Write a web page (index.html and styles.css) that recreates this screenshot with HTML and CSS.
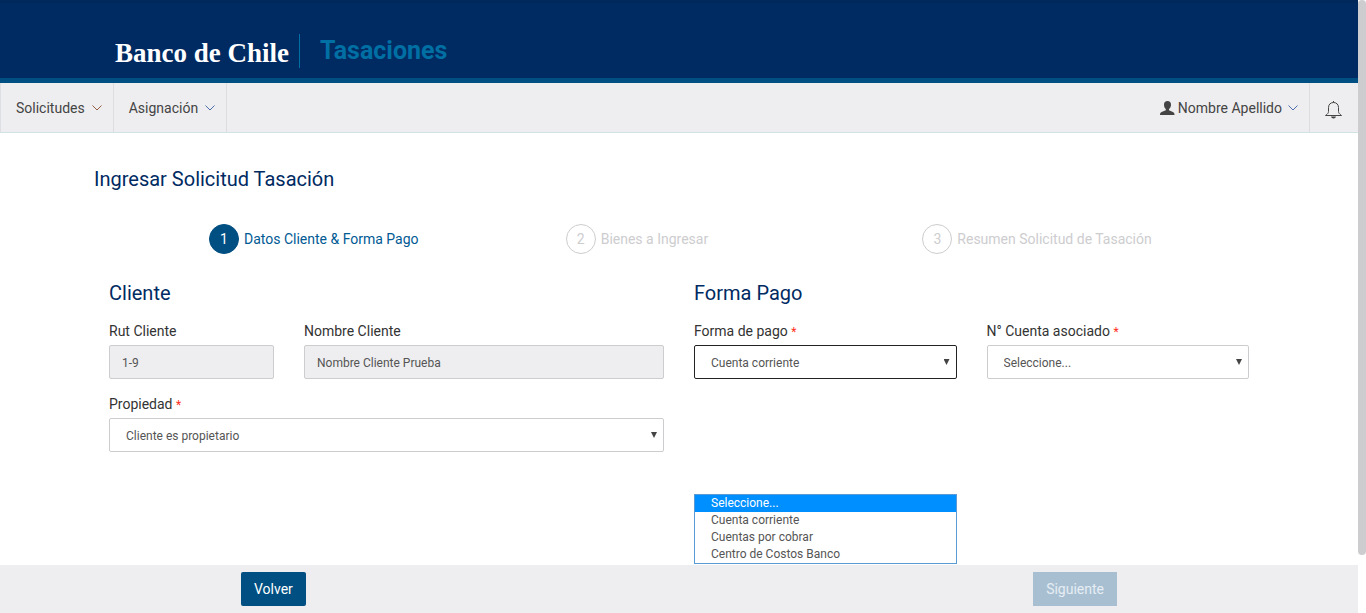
FILE: index.html
```html
<!DOCTYPE html>
<html lang="es">
<head>
<meta charset="utf-8">
<meta name="viewport" content="width=device-width, initial-scale=1">
<title>Tasaciones - Banco de Chile</title>
<link rel="stylesheet" href="styles.css">
</head>
<body>
<div class="shell">
  <div class="app">
    <header class="masthead">
      <div class="brand">
        <a class="brand-name" href="#">Banco de Chile</a>
        <span class="brand-app">Tasaciones</span>
      </div>
    </header>

    <nav class="navbar" aria-label="Principal">
      <a class="nav-item" href="#">Solicitudes
        <svg class="chevron chevron-warm" viewBox="0 0 10 6" aria-hidden="true"><path d="M.5.500l4.500 4.500 4.500-4.500"/></svg>
      </a>
      <a class="nav-item" href="#">Asignación
        <svg class="chevron" viewBox="0 0 10 6" aria-hidden="true"><path d="M.5.500l4.500 4.500 4.500-4.500"/></svg>
      </a>
      <a class="nav-item nav-user" href="#">
        <svg class="icon-user" viewBox="0 0 15 14" aria-hidden="true"><path d="M7.500 0C5.300 0 4 1.300 4 3.600c0 1.900.6 3.600 1.800 4.500v1.200L1.600 11C.5 11.500 0 12 0 14h14.500c0-2-.5-2.500-1.600-3L9 9.300V8.100c1.300-.9 2-2.600 2-4.500C11 1.300 9.700 0 7.500 0z"/></svg>
        <span class="user-name">Nombre Apellido</span>
        <svg class="chevron" viewBox="0 0 10 6" aria-hidden="true"><path d="M.5.500l4.500 4.500 4.500-4.500"/></svg>
      </a>
      <button class="nav-bell" type="button" aria-label="Notificaciones">
        <svg class="icon-bell" viewBox="0 0 17 18" aria-hidden="true"><path class="bell-line" d="M8.500 1.500C5.500 1.500 3.500 3.500 3.500 6.500v4c0 1.500-1 2.500-3 4h16c-2-1.500-3-2.500-3-4v-4c0-3-2-5-5-5zM8.500 1.500V0"/><path class="bell-clapper" d="M6 15.500h5c-.3 1.300-1.200 2-2.500 2s-2.200-.7-2.500-2z"/></svg>
      </button>
    </nav>

    <main class="content">
      <h1 class="page-title">Ingresar Solicitud Tasación</h1>
      <ol class="steps">
        <li class="step step-active" aria-current="step"><span class="step-number">1</span>Datos Cliente &amp; Forma Pago</li>
        <li class="step"><span class="step-number">2</span>Bienes a Ingresar</li>
        <li class="step"><span class="step-number">3</span>Resumen Solicitud de Tasación</li>
      </ol>

      <form class="panels">
        <section class="panel">
          <h2 class="panel-title">Cliente</h2>
          <div class="fields">
            <div class="field span-4">
              <label class="label" for="rut">Rut Cliente</label>
              <input class="control" id="rut" type="text" value="1-9" readonly>
            </div>
            <div class="field span-8">
              <label class="label" for="nombre">Nombre Cliente</label>
              <input class="control" id="nombre" type="text" value="Nombre Cliente Prueba" readonly>
            </div>
            <div class="field span-12">
              <label class="label" for="propiedad">Propiedad <span class="required">*</span></label>
              <div class="select">
                <select class="control" id="propiedad"><option>Cliente es propietario</option></select>
              </div>
            </div>
          </div>
        </section>

        <section class="panel">
          <h2 class="panel-title">Forma Pago</h2>
          <div class="fields">
            <div class="field span-6">
              <label class="label" for="forma">Forma de pago <span class="required">*</span></label>
              <div class="select select-open">
                <select class="control" id="forma">
                  <option>Seleccione...</option>
                  <option selected>Cuenta corriente</option>
                  <option>Cuentas por cobrar</option>
                  <option>Centro de Costos Banco</option>
                </select>
                <ul class="menu" role="listbox" aria-label="Forma de pago">
                  <li class="menu-item menu-item-active" role="option" aria-selected="true">Seleccione...</li>
                  <li class="menu-item" role="option">Cuenta corriente</li>
                  <li class="menu-item" role="option">Cuentas por cobrar</li>
                  <li class="menu-item" role="option">Centro de Costos Banco</li>
                </ul>
              </div>
            </div>
            <div class="field span-6">
              <label class="label" for="cuenta">N° Cuenta asociado <span class="required">*</span></label>
              <div class="select">
                <select class="control" id="cuenta"><option>Seleccione...</option></select>
              </div>
            </div>
          </div>
        </section>
      </form>
    </main>

    <footer class="actions">
      <div class="actions-inner">
        <button class="button" type="button">Volver</button>
        <button class="button" type="button" disabled>Siguiente</button>
      </div>
    </footer>
  </div>
  <div class="scroll-track" aria-hidden="true"><div class="scroll-thumb"></div></div>
</div>
</body>
</html>
```

FILE: styles.css
```css
* {
  box-sizing: border-box;
}

body {
  margin: 0;
  color: #333;
  background: #fff;
  font-family: Roboto, "Liberation Sans", sans-serif;
  font-size: 14px;
  line-height: 20px;
}

a {
  color: inherit;
  text-decoration: none;
}

.shell {
  display: flex;
  min-height: 100vh;
}

.app {
  display: flex;
  flex: 1;
  flex-direction: column;
  min-width: 0;
}

.scroll-track {
  flex: 0 0 8px;
  padding-bottom: 58px;
}

.scroll-thumb {
  height: 100%;
  border-radius: 4px;
  background: #cdcdcf;
}

/* Masthead */
.masthead {
  padding: 30px 115px 10px;
  border-top: 3px solid #00285b;
  border-bottom: 5px solid #004f82;
  background: #002a62;
}

.brand {
  display: flex;
  align-items: center;
  height: 35px;
}

.brand-name {
  width: 185px;
  padding-top: 4px;
  color: #fff;
  font: bold 27px/30px "Liberation Serif", serif;
  border-right: 1px solid #006fa3;
  white-space: nowrap;
}

.brand-app {
  padding-left: 20px;
  color: #006fa3;
  font-size: 25px;
  font-weight: 700;
}

/* Navigation */
.navbar {
  display: flex;
  height: 50px;
  border-bottom: 1px solid #d2e3e6;
  border-left: 1px solid #dedfe2;
  background: #eeeef0;
}

.nav-item {
  display: flex;
  gap: 7px;
  align-items: center;
  padding: 0 11px 0 15px;
  border-right: 1px solid #dcdde0;
  color: #444;
}

.nav-user {
  gap: 3px;
  margin-left: auto;
}

.user-name {
  padding-right: 3px;
}

.chevron {
  width: 10px;
  height: 6px;
  fill: none;
  stroke: #4d6fae;
}

.chevron-warm {
  stroke: #965f45;
}

.icon-user {
  width: 15px;
  height: 14px;
  fill: #444;
}

.nav-bell {
  width: 48px;
  padding: 7px 2px 0 0;
  border: 0;
  background: none;
}

.icon-bell {
  width: 17px;
  height: 18px;
}

.bell-line {
  fill: none;
  stroke: #444;
}

.bell-clapper {
  fill: #444;
}

/* Content */
.content {
  flex: 1;
  width: 100%;
  max-width: 1170px;
  margin: 0 auto;
  padding: 34px 0 48px;
}

.page-title,
.panel-title {
  margin: 0;
  color: #002a62;
  font-size: 20px;
  font-weight: 400;
  line-height: 24px;
}

.steps {
  display: grid;
  grid-template-columns: repeat(3, 1fr);
  margin: 33px -15px 0 115px;
  padding: 0;
  list-style: none;
}

.step {
  display: flex;
  gap: 5px;
  align-items: center;
  color: #cdcdcf;
}

.step-number {
  display: grid;
  place-items: center;
  width: 30px;
  height: 30px;
  border: 1px solid #cdcdcf;
  border-radius: 50%;
}

.step-active {
  color: #005a94;
}

.step-active .step-number {
  border-color: #004f82;
  color: #fff;
  background: #004f82;
}

.panels {
  display: grid;
  grid-template-columns: 1fr 1fr;
  gap: 30px;
  padding: 27px 15px 0;
}

.fields {
  display: grid;
  grid-template-columns: repeat(12, 1fr);
  gap: 15px 30px;
  padding-top: 16px;
}

.span-4 {
  grid-column: span 4;
}

.span-6 {
  grid-column: span 6;
}

.span-8 {
  grid-column: span 8;
}

.span-12 {
  grid-column: span 12;
}

.label {
  display: block;
  padding-bottom: 4px;
}

.required {
  color: #ff2d20;
  font-size: 12px;
  line-height: 12px;
}

.control {
  display: block;
  width: 100%;
  height: 34px;
  padding: 1px 12px 0;
  border: 1px solid #cdcdcf;
  border-radius: 2px;
  color: #555;
  background: #fff;
  font: inherit;
  font-size: 12px;
}

.control:read-only {
  background: #eeeef0;
}

.select {
  position: relative;
}

.select .control {
  padding: 1px 16px 0;
  background: #fff;
  appearance: none;
}

.select::after {
  position: absolute;
  top: 14px;
  right: 7px;
  width: 6px;
  height: 6px;
  background: #444;
  clip-path: polygon(0 0, 100% 0, 50% 100%);
  content: "";
  pointer-events: none;
}

.select-open .control {
  border-color: #222;
}

.menu {
  position: absolute;
  top: 149px;
  left: 0;
  width: 100%;
  margin: 0;
  padding: 0;
  border: 1px solid #5b9bd5;
  background: #fff;
  list-style: none;
}

.menu-item {
  padding: 0 16px;
  color: #555;
  font-size: 12px;
  line-height: 17px;
}

.menu-item-active {
  color: #fff;
  background: #008fff;
}

/* Footer actions */
.actions {
  padding: 7px 0;
  background: #eeeef0;
}

.actions-inner {
  display: flex;
  justify-content: space-between;
  max-width: 876px;
  margin: 0 auto;
}

.button {
  height: 34px;
  padding: 0 13px;
  border: 0;
  border-radius: 2px;
  color: #fff;
  background: #004f82;
  font: inherit;
}

.button:disabled {
  border-radius: 0;
  color: #e6edf3;
  background: #a8bfd2;
}
```
